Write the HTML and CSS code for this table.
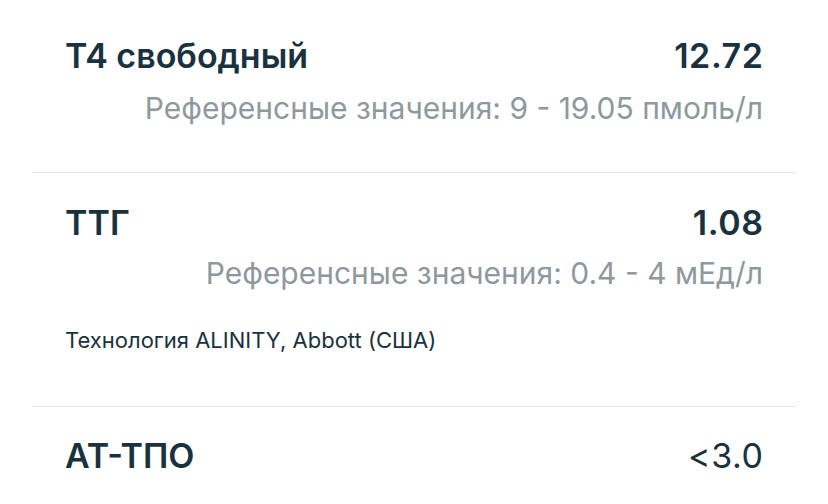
FILE: index.html
```html
<!DOCTYPE html>
<html lang="ru">
<head>
<meta charset="utf-8">
<link rel="stylesheet" href="styles.css">
</head>
<body>
<div class="list">
  <div class="item first">
    <div class="head"><span class="name">Т4 свободный</span><span class="value">12.72</span></div>
    <div class="ref">Референсные значения: 9 - 19.05 пмоль/л</div>
  </div>
  <div class="item second">
    <div class="head"><span class="name">ТТГ</span><span class="value">1.08</span></div>
    <div class="ref">Референсные значения: 0.4 - 4 мЕд/л</div>
    <div class="note">Технология ALINITY, Abbott (США)</div>
  </div>
  <div class="item third">
    <div class="head"><span class="name">АТ-ТПО</span><span class="value light">&lt;3.0</span></div>
  </div>
</div>
</body>
</html>
```

FILE: styles.css
```css
html, body {
  margin: 0;
  background: #ffffff;
}
body {
  font-family: Inter, "Liberation Sans", Arial, sans-serif;
  color: #19323d;
  overflow: hidden;
  height: 504px;
}
.list {
  padding: 0 32px;
}
.item {
  padding: 30px 33px 46px;
  border-bottom: 1px solid #e6e6e6;
}
.item.first {
  padding-top: 36px;
}
.item.second {
  padding-bottom: 52px;
}
.item.third {
  padding-top: 29px;
}
.head {
  display: flex;
  justify-content: space-between;
  align-items: baseline;
  font-size: 34px;
  line-height: 40px;
}
.name, .value {
  font-weight: 600;
}
.value {
  letter-spacing: 0.6px;
  margin-right: -0.6px;
}
.value.light {
  font-weight: normal;
}
.ref {
  margin-top: 14px;
  text-align: right;
  font-size: 30px;
  line-height: 36px;
  color: #8e999d;
}
.second .ref {
  margin-top: 12px;
}
.note {
  margin-top: 35px;
  font-size: 22px;
  line-height: 28px;
  color: #19323d;
}
```
